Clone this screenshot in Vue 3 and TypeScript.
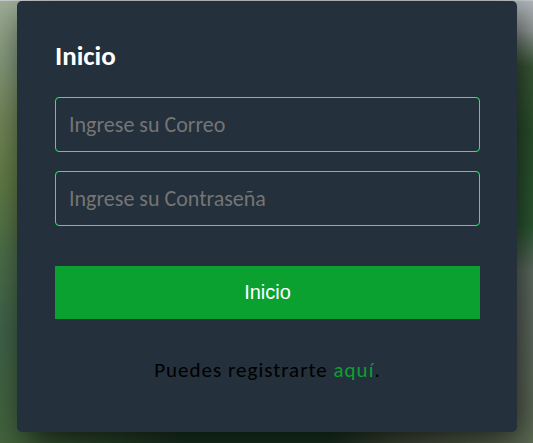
<script setup lang="ts">
import { ref } from 'vue'

const correo = ref<string>('')
const contrasena = ref<string>('')
</script>

<template>
  <main class="page">
    <form class="card" @submit.prevent>
      <h1 class="title">Inicio</h1>
      <input v-model="correo" class="field" type="email" name="correo" placeholder="Ingrese su Correo" aria-label="Correo" />
      <input v-model="contrasena" class="field" type="password" name="contrasena" placeholder="Ingrese su Contraseña" aria-label="Contraseña" />
      <button class="submit" type="submit">Inicio</button>
      <p class="note">Puedes registrarte <a class="link" href="#">aquí</a>.</p>
    </form>
  </main>
</template>

<style>
body {
  margin: 0;
}
</style>

<style scoped>
.page {
  box-sizing: border-box;
  min-height: 100vh;
  padding: 1px 16px 0 17px;
  overflow: hidden;
  font-family: Calibri, Carlito, Lato, sans-serif;
  background:
    linear-gradient(180deg, #c8cdcd, #c8cdcd) top / 100% 1px no-repeat,
    linear-gradient(90deg, transparent 5%, #1d3b25 35%, #1d3b25 62%, #4a5340 75%, transparent 94%) bottom / 100% 40px no-repeat,
    linear-gradient(180deg, #9fae9a 0%, #859a7b 14%, #728759 27%, #627c46 41%, #4e7049 56%, #40634a 75%, #44653c 100%) left / 50% 100% no-repeat,
    linear-gradient(180deg, #b4bcc2 0%, #a2aaa8 7%, #42653f 15%, #315b33 30%, #31653a 51%, #6c7b70 61%, #6b776b 75%, #66755c 100%) right / 50% 100% no-repeat;
}

.card {
  box-sizing: border-box;
  display: flex;
  flex-direction: column;
  max-width: 500px;
  margin: 0 auto;
  padding: 36px 37px 39px 38px;
  border-radius: 5px;
  background: #24303c;
  box-shadow: 7px 13px 37px rgba(0, 0, 0, 0.7);
}

.title {
  margin: 0 0 22px;
  color: #fff;
  font-size: 27px;
  font-weight: 700;
  line-height: 38px;
}

.field {
  box-sizing: border-box;
  width: 100%;
  height: 55px;
  margin: 0 0 19px;
  padding: 0 13px 1px;
  border: 1px solid #1ff071;
  border-radius: 4px;
  outline: none;
  background: transparent;
  color: #fff;
  font-family: inherit;
  font-size: 22px;
}

.field::placeholder {
  color: #757575;
  opacity: 1;
}

.submit {
  width: 100%;
  height: 53px;
  margin: 21px 0 0;
  padding: 0;
  border: 0;
  background: #0aa131;
  color: #fff;
  font-family: "Liberation Sans", Arial, sans-serif;
  font-size: 20px;
  cursor: pointer;
}

.note {
  margin: 28px 0 0;
  color: #000;
  font-size: 21px;
  letter-spacing: 1px;
  line-height: 46px;
  text-align: center;
}

.link {
  color: #0aa131;
  text-decoration: none;
}
</style>
